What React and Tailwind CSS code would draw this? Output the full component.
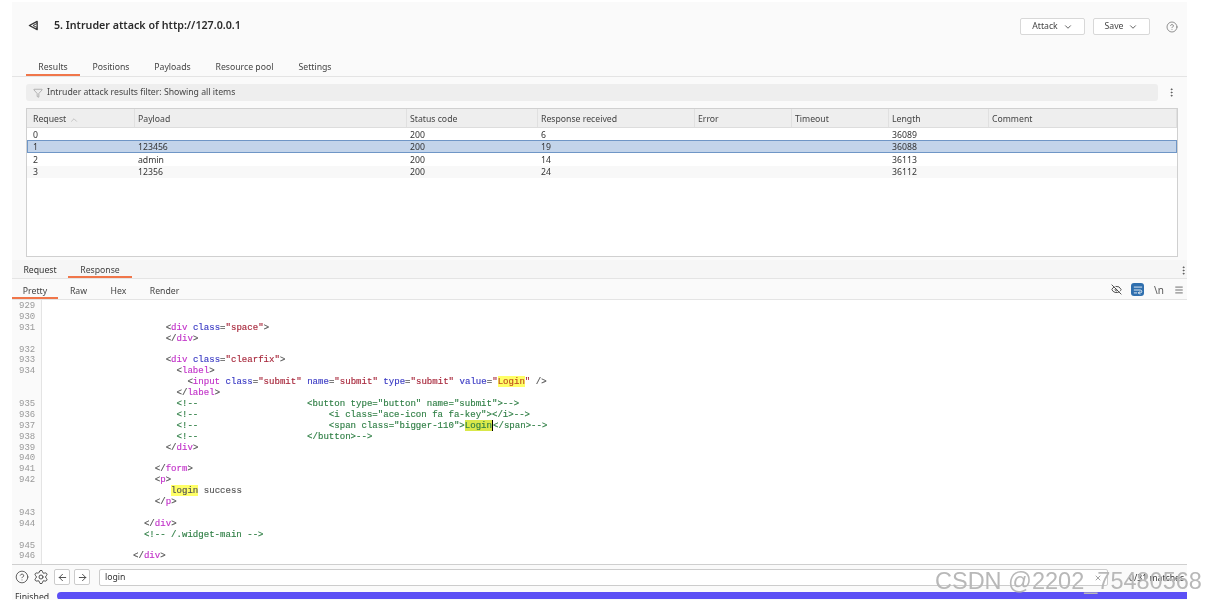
import React from 'react'
import { ArrowLeft, ArrowRight, ChevronDown, ChevronUp, CircleHelp, EllipsisVertical, EyeOff, Filter, Menu, Settings, WrapText, X } from 'lucide-react'

const columns = ['Request', 'Payload', 'Status code', 'Response received', 'Error', 'Timeout', 'Length', 'Comment']

const rows = [
  { id: '0', payload: '', status: '200', received: '6', length: '36089', style: 'bg-white h-[12px] pt-[2px]' },
  { id: '1', payload: '123456', status: '200', received: '19', length: '36088', style: 'bg-[#c3d4ea] h-[13px] pt-[2px] outline outline-1 -outline-offset-1 outline-[#6f96c6]' },
  { id: '2', payload: 'admin', status: '200', received: '14', length: '36113', style: 'bg-white h-[13px] pt-[2px]' },
  { id: '3', payload: '12356', status: '200', received: '24', length: '36112', style: 'bg-[#f8f8f8] h-[12px] pt-[1px]' },
]

const grid = 'grid grid-cols-[108px_272px_131px_157px_97px_97px_100px_1fr]'

// token helpers for the response pane
const P = ({ children }) => <span className="text-[#555555]">{children}</span>
const T = ({ children }) => <span className="text-[#c233c9]">{children}</span>
const A = ({ children }) => <span className="text-[#3a3ac4]">{children}</span>
const V = ({ children }) => <span className="text-[#a8283c]">{children}</span>
const C = ({ children }) => <span className="text-[#2f7f45]">{children}</span>
const Hit = ({ children }) => <span className="bg-[#ffff66] text-[#c05020]">{children}</span>

const code = [
  ['929', null],
  ['930', null],
  ['931', <>{' '.repeat(22)}<P>&lt;</P><T>div</T> <A>class</A><P>=</P><V>"space"</V><P>&gt;</P></>],
  ['', <>{' '.repeat(22)}<P>&lt;/</P><T>div</T><P>&gt;</P></>],
  ['932', null],
  ['933', <>{' '.repeat(22)}<P>&lt;</P><T>div</T> <A>class</A><P>=</P><V>"clearfix"</V><P>&gt;</P></>],
  ['934', <>{' '.repeat(24)}<P>&lt;</P><T>label</T><P>&gt;</P></>],
  ['', <>{' '.repeat(26)}<P>&lt;</P><T>input</T> <A>class</A><P>=</P><V>"submit"</V> <A>name</A><P>=</P><V>"submit"</V> <A>type</A><P>=</P><V>"submit"</V> <A>value</A><P>=</P><V>"</V><Hit>Login</Hit><V>"</V> <P>/&gt;</P></>],
  ['', <>{' '.repeat(24)}<P>&lt;/</P><T>label</T><P>&gt;</P></>],
  ['935', <C>{' '.repeat(24)}&lt;!--{' '.repeat(20)}&lt;button type="button" name="submit"&gt;--&gt;</C>],
  ['936', <C>{' '.repeat(24)}&lt;!--{' '.repeat(24)}&lt;i class="ace-icon fa fa-key"&gt;&lt;/i&gt;--&gt;</C>],
  ['937', <C>{' '.repeat(24)}&lt;!--{' '.repeat(24)}&lt;span class="bigger-110"&gt;<span className="border-r border-black bg-[#d9e84a]">Login</span>&lt;/span&gt;--&gt;</C>],
  ['938', <C>{' '.repeat(24)}&lt;!--{' '.repeat(20)}&lt;/button&gt;--&gt;</C>],
  ['939', <>{' '.repeat(22)}<P>&lt;/</P><T>div</T><P>&gt;</P></>],
  ['940', null],
  ['941', <>{' '.repeat(20)}<P>&lt;/</P><T>form</T><P>&gt;</P></>],
  ['942', <>{' '.repeat(20)}<P>&lt;</P><T>p</T><P>&gt;</P></>],
  ['', <>{' '.repeat(23)}<span className="bg-[#ffff66] text-[#555555]">login</span> <P>success</P></>],
  ['', <>{' '.repeat(20)}<P>&lt;/</P><T>p</T><P>&gt;</P></>],
  ['943', null],
  ['944', <>{' '.repeat(18)}<P>&lt;/</P><T>div</T><P>&gt;</P></>],
  ['', <C>{' '.repeat(18)}&lt;!-- /.widget-main --&gt;</C>],
  ['945', null],
  ['946', <>{' '.repeat(16)}<P>&lt;/</P><T>div</T><P>&gt;</P></>],
]

// the small arrow mark next to the attack title
function AttackLogo() {
  return (
    <svg width="11" height="11" viewBox="0 0 12 12" fill="none" stroke="#333333" strokeWidth="1.4" strokeLinejoin="round">
      <path d="M10 1.5 L1.5 6 L10 10.5 Z" />
      <path d="M5.5 6 L10 3.8 M5.5 6 L10 8.2" strokeWidth="1" />
    </svg>
  )
}

function TabBar({ tabs, active, sizes }) {
  return tabs.map((t, i) => (
    <div key={t} className={`flex items-center justify-center ${sizes[i]} ${i === active ? 'border-b-2 border-[#f0764a]' : 'border-b-2 border-transparent'}`}>{t}</div>
  ))
}

export default function App() {
  return (
    <div className="relative h-[600px] w-[1206px] overflow-hidden bg-white text-[8.7px] text-[#444444] blur-[0.45px]" style={{ fontFamily: '"Noto Sans", sans-serif' }}>
      <div className="ml-[12px] mt-[2px] flex h-[598px] w-[1175px] flex-col bg-[#fafafa]">
        {/* title */}
        <div className="flex h-[46px] items-center pl-[16px] pr-[9px]">
          <AttackLogo />
          <span className="ml-[15px] text-[10.7px] font-semibold text-[#2b2b2b]">5. Intruder attack of http://127.0.0.1</span>
          <div className="ml-auto mt-[3px] flex items-center">
            <button className="flex h-[17px] w-[65px] items-center justify-center gap-[5px] rounded-[2px] border border-[#d8d8d8] bg-white">Attack <ChevronDown size={10} /></button>
            <button className="ml-[8px] flex h-[17px] w-[57px] items-center justify-center gap-[5px] rounded-[2px] border border-[#d8d8d8] bg-white">Save <ChevronDown size={10} /></button>
            <CircleHelp size={12} strokeWidth={1.4} className="ml-[16px] text-[#666666]" />
          </div>
        </div>

        {/* main tabs */}
        <div className="flex h-[29px] items-end border-b border-[#e4e4e4] pl-[14px]">
          <TabBar tabs={['Results', 'Positions', 'Payloads', 'Resource pool', 'Settings']} active={0} sizes={['w-[54px] h-[14px]', 'w-[62px] h-[14px]', 'w-[61px] h-[14px]', 'w-[83px] h-[14px]', 'w-[58px] h-[14px]']} />
        </div>

        {/* filter */}
        <div className="mt-[7px] flex h-[17px] items-center pl-[14px]">
          <div className="flex h-[17px] w-[1132px] items-center rounded-[3px] bg-[#eeeeee] pl-[7px]">
            <Filter size={10} strokeWidth={1.2} className="mr-[4px] text-[#777777]" />
            <span className="pt-[1px]">Intruder attack results filter: Showing all items</span>
          </div>
          <EllipsisVertical size={11} className="ml-[8px] text-[#555555]" />
        </div>

        {/* results table */}
        <div className="ml-[14px] mt-[7px] h-[149px] w-[1152px] border border-[#d0d0d0] bg-white">
          <div className={`${grid} h-[19px] items-stretch border-b border-[#dddddd] bg-[#eeeeee]`}>
            {columns.map((c, i) => (
              <div key={c} className={`flex items-center border-r border-[#e0e0e0] pt-[3px] ${i === 0 ? 'pl-[6px]' : 'pl-[3px]'}`}>
                {c}
                {i === 0 && <ChevronUp size={10} className="ml-[3px] text-[#bbbbbb]" />}
              </div>
            ))}
          </div>
          {rows.map((r) => (
            <div key={r.id} className={`${grid} items-center leading-none text-[#333333] ${r.style}`}>
              <div className="pl-[6px]">{r.id}</div>
              <div className="pl-[3px]">{r.payload}</div>
              <div className="pl-[3px]">{r.status}</div>
              <div className="pl-[3px]">{r.received}</div>
              <div />
              <div />
              <div className="pl-[3px]">{r.length}</div>
              <div />
            </div>
          ))}
        </div>

        {/* request / response tabs */}
        <div className="mt-[3px] flex h-[19px] items-end border-b border-[#e4e4e4] bg-[#f6f6f6]">
          <div className="flex h-[14px] w-[56px] items-center justify-center border-b-2 border-transparent pt-[1px] text-[#333333]">Request</div>
          <div className="flex h-[14px] w-[64px] items-center justify-center border-b-2 border-[#f0764a] pt-[1px]">Response</div>
          <EllipsisVertical size={11} className="mb-[2px] ml-auto mr-[-2px] text-[#555555]" />
        </div>

        {/* pretty / raw tabs */}
        <div className="flex h-[21px] items-end border-b border-[#e4e4e4] bg-[#fafafa]">
          <TabBar tabs={['Pretty', 'Raw', 'Hex', 'Render']} active={0} sizes={['w-[46px] h-[12px]', 'w-[41px] h-[12px]', 'w-[39px] h-[12px]', 'w-[53px] h-[12px]']} />
          <div className="mb-[3px] ml-auto flex items-center gap-[9.5px] pr-[3px]">
            <EyeOff size={11} className="text-[#444444]" />
            <div className="flex h-[13px] w-[13px] items-center justify-center rounded-[3px] bg-[#2f6fae]">
              <WrapText size={10} className="text-white" />
            </div>
            <span className="w-[11px] text-center text-[10px] leading-none text-[#555555]">\n</span>
            <Menu size={10} className="text-[#555555]" />
          </div>
        </div>

        {/* response body */}
        <div className="h-[264px] overflow-hidden bg-white" style={{ fontFamily: '"Liberation Mono", monospace' }}>
          <div className="flex min-h-full">
            <div className="w-[30px] shrink-0 border-r border-[#e4e4e4] bg-[#fafafa] pt-[1px]">
              {code.map(([n], i) => (
                <div key={i} className="h-[10.9px] pl-[7px] text-[9px] leading-[10.9px] text-[#999999]">{n}</div>
              ))}
            </div>
            <div className="flex-1 pl-[4px] pt-[1px] [-webkit-text-stroke:0.15px]">
              {code.map(([, line], i) => (
                <div key={i} className="h-[10.9px] whitespace-pre text-[9.07px] leading-[10.9px]">{line}</div>
              ))}
            </div>
          </div>
        </div>

        {/* search bar */}
        <div className="flex h-[25px] items-start border-t border-[#cfcfcf] bg-[#fafafa] pl-[3px] pt-[4px]">
          <CircleHelp size={14} strokeWidth={1.4} className="mt-[1px] text-[#444444]" />
          <Settings size={16} strokeWidth={1.4} className="ml-[4px] text-[#444444]" />
          <div className="ml-[5px] flex h-[16px] w-[16px] items-center justify-center rounded-[2px] border border-[#cccccc] bg-white"><ArrowLeft size={11} /></div>
          <div className="ml-[4px] flex h-[16px] w-[16px] items-center justify-center rounded-[2px] border border-[#cccccc] bg-white"><ArrowRight size={11} /></div>
          <div className="ml-[9px] flex h-[17px] w-[1009px] items-center rounded-[2px] border border-[#cccccc] bg-white pl-[5px] pt-[1px] text-[#333333]">
            login
            <X size={8} className="ml-auto mr-[5px] text-[#777777]" />
          </div>
          <span className="ml-[21px] mt-[3px] whitespace-nowrap text-[#333333]">0/31 matches</span>
        </div>

        {/* status */}
        <div className="flex h-[10px] items-start overflow-hidden">
          <span className="ml-[3px] mt-[1px] w-[42px] leading-[14px] text-[#333333]">Finished</span>
          <div className="mt-[3px] h-[8px] flex-1 rounded-l-[4px] bg-[#5b4ff5]" />
        </div>
      </div>

      {/* site watermark over the corner */}
      <span className="absolute left-[935px] top-[568px] whitespace-nowrap text-[23.5px] leading-[26px] text-[#b8b8b8]" style={{ fontFamily: '"Liberation Sans", sans-serif' }}>CSDN @2202_75480568</span>
    </div>
  )
}
